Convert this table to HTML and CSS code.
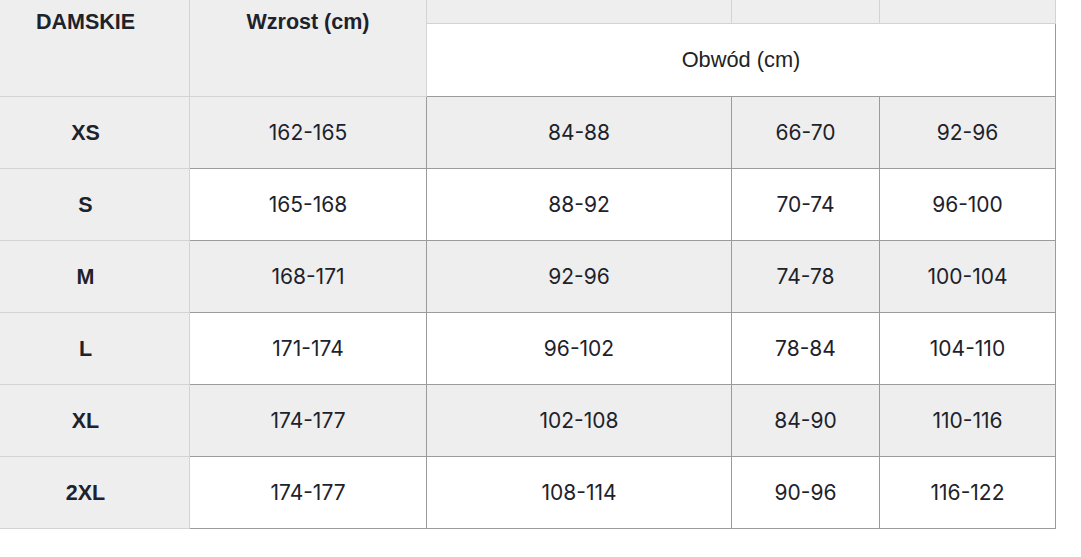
FILE: index.html
```html
<!DOCTYPE html>
<html lang="pl">
<head>
<meta charset="utf-8">
<title>Tabela rozmiarów</title>
<link rel="stylesheet" href="styles.css">
</head>
<body>
<div class="size-table">
  <div class="cell head first tall">DAMSKIE</div>
  <div class="cell head tall">Wzrost (cm)</div>
  <div class="cell head blank"></div>
  <div class="cell head blank"></div>
  <div class="cell head blank"></div>
  <div class="cell obwod">Obwód (cm)</div>

  <div class="cell size">XS</div>
  <div class="cell data odd">162-165</div>
  <div class="cell data odd">84-88</div>
  <div class="cell data odd">66-70</div>
  <div class="cell data odd">92-96</div>

  <div class="cell size">S</div>
  <div class="cell data">165-168</div>
  <div class="cell data">88-92</div>
  <div class="cell data">70-74</div>
  <div class="cell data">96-100</div>

  <div class="cell size">M</div>
  <div class="cell data odd">168-171</div>
  <div class="cell data odd">92-96</div>
  <div class="cell data odd">74-78</div>
  <div class="cell data odd">100-104</div>

  <div class="cell size">L</div>
  <div class="cell data">171-174</div>
  <div class="cell data">96-102</div>
  <div class="cell data">78-84</div>
  <div class="cell data">104-110</div>

  <div class="cell size">XL</div>
  <div class="cell data odd">174-177</div>
  <div class="cell data odd">102-108</div>
  <div class="cell data odd">84-90</div>
  <div class="cell data odd">110-116</div>

  <div class="cell size">2XL</div>
  <div class="cell data">174-177</div>
  <div class="cell data">108-114</div>
  <div class="cell data">90-96</div>
  <div class="cell data">116-122</div>
</div>
</body>
</html>
```
FILE: styles.css
```css
html, body {
  margin: 0;
  padding: 0;
  background: #ffffff;
}

.size-table {
  display: grid;
  grid-template-columns: 190px 237px 305px 148px 176px;
  grid-template-rows: 24px 73px repeat(6, 72px);
  width: 1056px;
}

.cell {
  box-sizing: border-box;
  display: flex;
  align-items: center;
  justify-content: center;
  border-right: 1px solid #d3d3d3;
  border-bottom: 1px solid #d3d3d3;
  background: #eeeeee;
  color: #1d222b;
  line-height: 24px;
}

.head {
  font-family: "Liberation Sans", Arial, sans-serif;
  font-weight: 700;
  font-size: 21.5px;
  align-items: flex-start;
  padding-top: 10px;
}

.tall {
  grid-row: span 2;
}

.first {
  padding-right: 18px;
}

.blank {
  padding-top: 0;
}

.obwod {
  grid-column: span 3;
  background: #ffffff;
  border-right-color: #9b9b9b;
  border-bottom-color: #9b9b9b;
  font-family: "Liberation Sans", Arial, sans-serif;
  font-size: 21.8px;
  color: #222222;
  padding-bottom: 1px;
}

.size {
  font-family: "Liberation Sans", Arial, sans-serif;
  font-weight: 700;
  font-size: 21.5px;
  padding-right: 18px;
}

.data {
  background: #ffffff;
  border-right-color: #9b9b9b;
  border-bottom-color: #9b9b9b;
  font-family: Inter, "Open Sans", sans-serif;
  font-size: 21px;
}

.data.odd {
  background: #eeeeee;
}
```
